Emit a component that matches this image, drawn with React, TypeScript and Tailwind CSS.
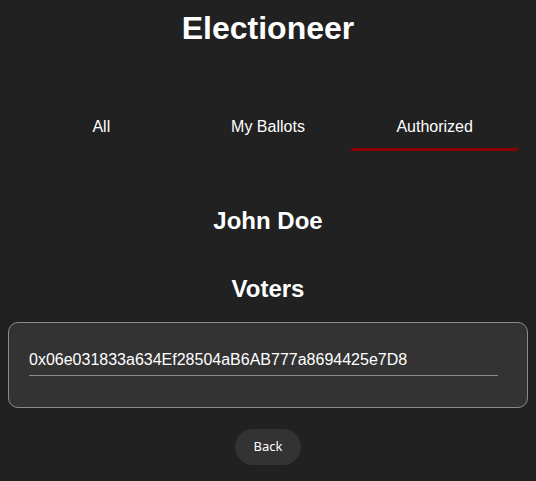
import React from "react";

export default function App() {
  const tabs = ["All", "My Ballots", "Authorized"];
  const active = 2;
  return (
    <div
      className="min-h-[481px] w-full bg-[#212121] text-white flex flex-col items-center"
      style={{ fontFamily: '"Liberation Sans", Arial, sans-serif' }}
    >
      <h1 className="pt-[10px] text-[32px] leading-[36px] font-bold">Electioneer</h1>

      <div className="mt-[57px] w-[500px] grid grid-cols-3">
        {tabs.map((t, i) => (
          <div key={t} className="relative h-[48px] flex items-center justify-center text-[16px]">
            {t}
            {i === active && (
              <div className="absolute left-0 right-0 bottom-0 h-[3px] bg-[#8b0000]" />
            )}
          </div>
        ))}
      </div>

      <h2 className="mt-[56px] text-[24px] leading-[28px] font-bold">John Doe</h2>
      <h2 className="mt-[40px] text-[24px] leading-[28px] font-bold">Voters</h2>

      <div className="mt-[19px] w-[520px] h-[86px] rounded-[10px] border border-[#8a8a8a] bg-[#333333] pt-[24px] px-5">
        <input
          readOnly
          value="0x06e031833a634Ef28504aB6AB777a8694425e7D8"
          className="block w-[469px] h-[29px] pt-[4px] pb-[6px] leading-[18px] text-[16px] text-white bg-transparent border-b border-[#8a8a8a] outline-none"
          style={{ fontFamily: '"Liberation Sans", Arial, sans-serif' }}
        />
      </div>

      <button
        className="mt-[21px] w-[66px] h-[36px] rounded-full bg-[#333333] text-white text-[13px]"
        style={{ fontFamily: '"Noto Sans", sans-serif' }}
      >
        Back
      </button>
    </div>
  );
}
